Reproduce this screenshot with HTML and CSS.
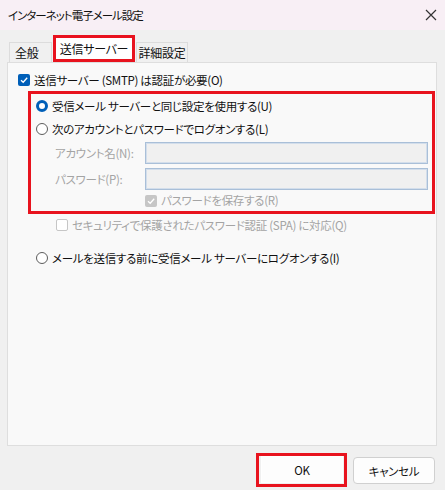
FILE: index.html
```html
<!DOCTYPE html>
<html lang="ja">
<head>
  <meta charset="UTF-8" />
  <title>インターネット電子メール設定</title>
  <link rel="stylesheet" href="styles.css">
</head>
<body>
  <div class="dialog">
    <!-- Title bar -->
    <div class="titlebar">
      <span class="title">インターネット電子メール設定</span>
      <svg class="close" width="12" height="12" viewBox="0 0 12 12">
        <path d="M1 1 L11 11 M11 1 L1 11" stroke="#333" stroke-width="1.2" fill="none" />
      </svg>
    </div>

    <div class="body">
      <!-- Tabs -->
      <div class="tabs">
        <div class="tab first">全般</div>
        <div class="tab active">送信サーバー</div>
        <div class="tab last">詳細設定</div>
      </div>

      <!-- Panel -->
      <div class="panel">
        <div class="row top">
          <span class="check on"><svg width="10" height="10" viewBox="0 0 10 10"><path d="M2 5.2 L4.2 7.3 L8.2 2.8" stroke="#fff" stroke-width="1.3" fill="none" /></svg></span>
          <span>送信サーバー (SMTP) は認証が必要(O)</span>
        </div>

        <div class="highlight">
          <div class="row">
            <span class="radio on"></span>
            <span>受信メール サーバーと同じ設定を使用する(U)</span>
          </div>
          <div class="row">
            <span class="radio"></span>
            <span>次のアカウントとパスワードでログオンする(L)</span>
          </div>
          <div class="field">
            <span class="label">アカウント名(N):</span>
            <span class="input"></span>
          </div>
          <div class="field">
            <span class="label">パスワード(P):</span>
            <span class="input"></span>
          </div>
          <div class="row save">
            <span class="check dim"><svg width="10" height="10" viewBox="0 0 10 10"><path d="M2 5.2 L4.2 7.3 L8.2 2.8" stroke="#fff" stroke-width="1.3" fill="none" /></svg></span>
            <span class="muted">パスワードを保存する(R)</span>
          </div>
        </div>

        <div class="row spa">
          <span class="check off"></span>
          <span class="muted">セキュリティで保護されたパスワード認証 (SPA) に対応(Q)</span>
        </div>

        <div class="row logon">
          <span class="radio"></span>
          <span>メールを送信する前に受信メール サーバーにログオンする(I)</span>
        </div>
      </div>

      <!-- Buttons -->
      <div class="buttons">
        <div class="ok-mark"><div class="button">OK</div></div>
        <div class="button">キャンセル</div>
      </div>
    </div>
  </div>
</body>
</html>
```

FILE: styles.css
```css
body {
  margin: 0;
  font-family: "Noto Sans CJK JP", "Noto Sans", sans-serif;
  font-size: 11.5px;
  letter-spacing: -0.3px;
  color: #111;
  font-feature-settings: "palt";
}

.dialog {
  width: 445px;
  height: 490px;
  background: #f0f0f0;
  display: flex;
  flex-direction: column;
}

/* Title bar */
.titlebar {
  height: 30px;
  background: #f8eff5;
  display: flex;
  align-items: center;
  justify-content: space-between;
  padding: 0 8px 0 8px;
  box-sizing: border-box;
  flex-shrink: 0;
}

.title {
  font-size: 11.5px;
  letter-spacing: -1px;
}

.body {
  padding: 0 8px 0 7px;
  display: flex;
  flex-direction: column;
  flex: 1;
}

/* Tabs */
.tabs {
  display: flex;
  align-items: flex-end;
  height: 32px;
  padding-left: 2px;
  font-size: 12px;
}

.tab {
  height: 20px;
  line-height: 20px;
  border: 1px solid #dcdcdc;
  border-bottom: none;
  background: #f0f0f0;
  text-align: center;
}

.tab.first {
  width: 43px;
  box-sizing: border-box;
  padding-left: 5px;
  text-align: left;
}

.tab.last {
  width: 52px;
  box-sizing: border-box;
  margin-left: 1px;
}

.tab.active {
  width: 82px;
  height: 27px;
  line-height: 21px;
  box-sizing: border-box;
  background: #fff;
  border: 3px solid #e8131e;
  margin-left: 1px;
}

.panel {
  background: #f9f9f9;
  border: 1px solid #dedede;
  height: 384px;
  box-sizing: border-box;
  padding: 7px 0 0 10px;
}

.row {
  display: flex;
  align-items: center;
  height: 23px;
  gap: 4px;
}

.row.top {
  height: 20px;
}

/* Checkboxes and radios */
.check {
  width: 12px;
  height: 12px;
  border-radius: 2px;
  box-sizing: border-box;
  display: flex;
  align-items: center;
  justify-content: center;
  flex-shrink: 0;
}

.check.on {
  background: #005fb8;
}

.check.dim {
  background: #c6c6c6;
}

.check.off {
  border: 1px solid #c6c6c6;
  background: #fff;
}

.radio {
  width: 12px;
  height: 12px;
  border-radius: 50%;
  border: 1px solid #5d5d5d;
  box-sizing: border-box;
  background: #fff;
  flex-shrink: 0;
}

.radio.on {
  border: 3.5px solid #005fb8;
}

/* Red highlight group */
.highlight {
  border: 3px solid #e8131e;
  margin: 1px 1px 0 10px;
  padding: 0 0 0 5px;
}

.field {
  display: flex;
  align-items: center;
  height: 26px;
  margin-left: 19px;
}

.label {
  width: 90px;
  color: #a4a4a4;
}

.input {
  width: 283px;
  height: 22px;
  box-sizing: border-box;
  border: 1px solid #a9bfd8;
  box-shadow: inset 0 0 0 1px #d3deeb;
  background: #f0f0f0;
}

.muted {
  color: #a4a4a4;
}

.row.save {
  height: 19px;
  margin-left: 109px;
  align-items: flex-start;
  padding-top: 3px;
  box-sizing: border-box;
}

.row.save .muted {
  margin-top: -3px;
}

.row.spa {
  height: 22px;
  margin-left: 38px;
}

.row.logon {
  margin-left: 18px;
  margin-top: 10px;
}

/* Buttons */
.buttons {
  display: flex;
  justify-content: flex-end;
  align-items: center;
  gap: 6px;
  margin-top: 7px;
  padding-right: 2px;
}

.ok-mark {
  border: 3px solid #e8131e;
  padding: 0 1px 1px 2px;
}

.button {
  width: 82px;
  height: 27px;
  line-height: 27px;
  text-align: center;
  background: #fdfdfd;
  border: 1px solid #d0d0d0;
  border-radius: 4px;
  box-sizing: border-box;
}

.ok-mark .button {
  border-radius: 0;
  border-color: #fff;
}
```
